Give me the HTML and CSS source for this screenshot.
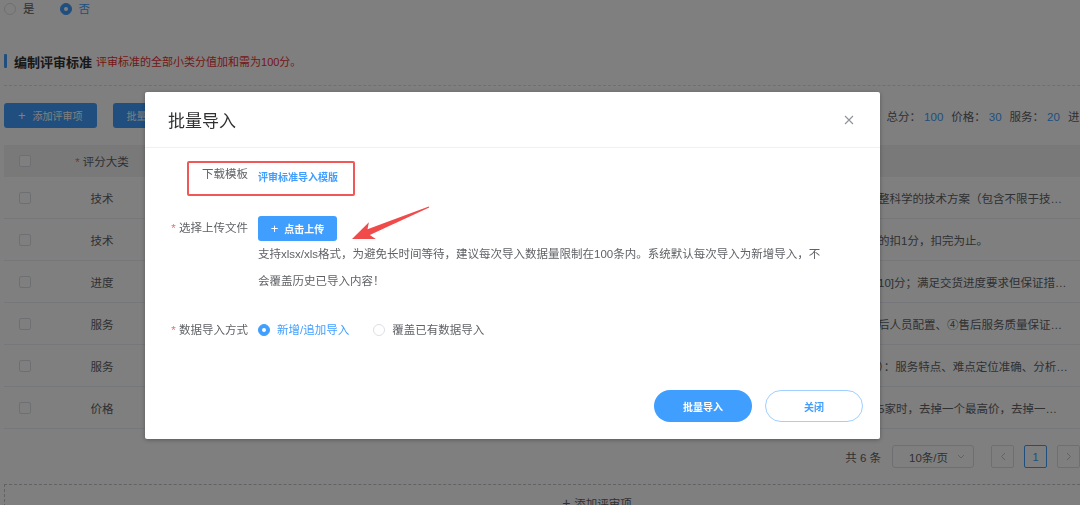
FILE: index.html
```html
<!DOCTYPE html>
<html lang="zh-CN">
  <head>
    <meta charset="utf-8" />
    <title>编制评审标准 - 批量导入</title>
    <link rel="stylesheet" href="styles.css">
  </head>

  <body>
    <div class="page">
      <div class="radio-row">
        <label class="radio"><span class="radio-dot"></span>是</label>
        <label class="radio is-checked"><span class="radio-dot"></span>否</label>
      </div>

      <div class="section-title">
        <span class="title-bar"></span>
        <b>编制评审标准</b>
        <span class="title-tip">评审标准的全部小类分值加和需为100分。</span>
      </div>
      <div class="divider"></div>

      <div class="toolbar">
        <button type="button" class="btn btn-primary"><span class="plus">+</span>添加评审项</button>
        <button type="button" class="btn btn-primary">批量导入</button>
        <div class="score-sum">
          总分：<em>100</em>价格：<em>30</em>服务：<em>20</em>进
        </div>
      </div>

      <!-- 评审项表格 -->
      <div class="table">
        <div class="tr th">
          <div class="td"><span class="checkbox"></span></div>
          <div class="td center"><i class="req">*</i> 评分大类</div>
          <div class="td"></div>
          <div class="td"></div>
          <div class="td"></div>
          <div class="td"></div>
        </div>
        <div class="tr">
          <div class="td"><span class="checkbox"></span></div>
          <div class="td center">技术</div>
          <div class="td">技术方案</div>
          <div class="td">20</div>
          <div class="td desc">整科学的技术方案（包含不限于技术路线、实施方案）</div>
          <div class="td"></div>
        </div>
        <div class="tr">
          <div class="td"><span class="checkbox"></span></div>
          <div class="td center">技术</div>
          <div class="td">技术偏离</div>
          <div class="td">10</div>
          <div class="td desc">的扣1分，扣完为止。</div>
          <div class="td"></div>
        </div>
        <div class="tr">
          <div class="td"><span class="checkbox"></span></div>
          <div class="td center">进度</div>
          <div class="td">交货进度</div>
          <div class="td">20</div>
          <div class="td desc">10]分；满足交货进度要求但保证措施一般的</div>
          <div class="td"></div>
        </div>
        <div class="tr">
          <div class="td"><span class="checkbox"></span></div>
          <div class="td center">服务</div>
          <div class="td">售后服务</div>
          <div class="td">10</div>
          <div class="td desc">后人员配置、④售后服务质量保证措施</div>
          <div class="td"></div>
        </div>
        <div class="tr">
          <div class="td"><span class="checkbox"></span></div>
          <div class="td center">服务</div>
          <div class="td">服务方案</div>
          <div class="td">10</div>
          <div class="td desc">）：服务特点、难点定位准确、分析透彻</div>
          <div class="td"></div>
        </div>
        <div class="tr">
          <div class="td"><span class="checkbox"></span></div>
          <div class="td center">价格</div>
          <div class="td">投标报价</div>
          <div class="td">30</div>
          <div class="td desc">5家时，去掉一个最高价，去掉一个最低价</div>
          <div class="td"></div>
        </div>
      </div>

      <div class="pager">
        <span class="pager-total">共 6 条</span>
        <div class="pager-size">10条/页<svg width="8" height="5" viewBox="0 0 8 5"><path d="M1 1l3 3 3-3" fill="none" stroke="#c0c4cc" stroke-width="1"/></svg></div>
        <button type="button" class="pager-btn"><svg width="6" height="9" viewBox="0 0 6 9"><path d="M5 1L1.5 4.5 5 8" fill="none" stroke="#c0c4cc"/></svg></button>
        <button type="button" class="pager-btn active">1</button>
        <button type="button" class="pager-btn"><svg width="6" height="9" viewBox="0 0 6 9"><path d="M1 1l3.5 3.5L1 8" fill="none" stroke="#c0c4cc"/></svg></button>
      </div>

      <div class="add-box"><span class="plus">+</span>添加评审项</div>
    </div>

    <div class="mask"></div>

    <!-- 批量导入弹窗 -->
    <div class="dialog">
      <div class="dialog-header">
        <span class="dialog-title">批量导入</span>
        <svg class="dialog-close" width="10" height="10" viewBox="0 0 10 10"><path d="M1 1l8 8M9 1l-8 8" stroke="#909399" stroke-width="1.1"/></svg>
      </div>

      <div class="dialog-body">
        <div class="form-row row-template">
          <div class="form-label">下载模板</div>
          <a class="template-link">评审标准导入模版</a>
          <div class="mark-box"></div>
        </div>

        <div class="form-row row-upload">
          <div class="form-label"><i class="req">*</i> 选择上传文件</div>
          <div class="form-content">
            <button type="button" class="upload-btn"><span class="plus">+</span>点击上传</button>
            <p class="upload-tip">支持xlsx/xls格式，为避免长时间等待，建议每次导入数据量限制在100条内。系统默认每次导入为新增导入，不会覆盖历史已导入内容！</p>
          </div>
        </div>

        <div class="form-row row-mode">
          <div class="form-label"><i class="req">*</i> 数据导入方式</div>
          <label class="radio is-checked"><span class="radio-dot"></span>新增/追加导入</label>
          <label class="radio"><span class="radio-dot"></span>覆盖已有数据导入</label>
        </div>
      </div>

      <div class="dialog-footer">
        <button type="button" class="round-btn primary">批量导入</button>
        <button type="button" class="round-btn plain">关闭</button>
      </div>

      <svg class="mark-arrow" width="300" height="160" viewBox="0 0 300 160">
        <polygon points="284.2,115.6 224.8,142.9 230.8,146.9 207,147 223.9,130.3 222.5,137.3 283.8,114.4" fill="#f04a4a"/>
      </svg>
    </div>
  </body>
</html>
```

FILE: styles.css
```css
html {
  overflow: hidden;
}
body {
  margin: 0;
  background: #fff;
  font-family: "Liberation Sans", "Noto Sans CJK SC", sans-serif;
  font-size: 11.5px;
  color: #606266;
}
.page {
  width: 1186px;
  padding-left: 4px;
}
button {
  font-family: inherit;
  cursor: pointer;
}
em {
  font-style: normal;
}
.req {
  font-style: normal;
  color: #f56c6c;
}

/* radio */
.radio {
  display: inline-flex;
  align-items: center;
  color: #606266;
}
.radio-dot {
  width: 10px;
  height: 10px;
  border: 1px solid #dcdfe6;
  border-radius: 50%;
  background: #fff;
  margin-right: 7px;
  position: relative;
}
.radio.is-checked {
  color: #409eff;
}
.radio.is-checked .radio-dot {
  background: #409eff;
  border-color: #409eff;
}
.radio.is-checked .radio-dot::after {
  content: "";
  position: absolute;
  left: 3px;
  top: 3px;
  width: 4px;
  height: 4px;
  border-radius: 50%;
  background: #fff;
}
.radio-row {
  display: flex;
  gap: 25px;
  height: 18px;
  line-height: 18px;
}

/* section */
.section-title {
  margin-top: 33px;
  height: 20px;
  display: flex;
  align-items: center;
}
.title-bar {
  width: 3px;
  height: 14px;
  background: #409eff;
  border-radius: 1px;
  margin-right: 7px;
}
.section-title b {
  font-size: 13px;
  color: #303133;
}
.title-tip {
  font-size: 11px;
  color: #e8302f;
  margin-left: 4px;
}
.divider {
  margin-top: 14px;
  border-top: 1px dashed #dcdfe6;
}

/* toolbar */
.toolbar {
  margin-top: 17px;
  display: flex;
  align-items: center;
}
.btn {
  height: 25px;
  border: 0;
  border-radius: 3px;
  padding: 0 14px;
  font-size: 10px;
  margin-right: 16px;
}
.btn-primary {
  background: #409eff;
  color: #fff;
}
.btn .plus {
  font-size: 13px;
  margin-right: 7px;
}
.score-sum {
  margin-left: 690px;
  color: #606266;
  white-space: nowrap;
}
.score-sum em {
  color: #409eff;
  margin: 0 8px 0 3px;
}

/* table */
.table {
  margin-top: 17px;
}
.tr {
  display: grid;
  grid-template-columns: 42px 112px 300px 410px 230px 92px;
  height: 42px;
  align-items: center;
  border-bottom: 1px solid #ebeef5;
  box-sizing: border-box;
}
.tr.th {
  height: 32px;
  background: #f2f3f5;
  border-bottom: 0;
  color: #606266;
}
.td {
  padding-left: 10px;
  white-space: nowrap;
  overflow: hidden;
}
.td:first-child {
  padding-left: 15px;
  display: flex;
}
.td.center {
  text-align: center;
  padding-left: 0;
}
.td.desc {
  text-overflow: ellipsis;
  padding-right: 30px;
}
.checkbox {
  width: 10px;
  height: 10px;
  border: 1px solid #dcdfe6;
  border-radius: 2px;
  background: #fff;
}

/* pager */
.pager {
  margin-top: 16px;
  display: flex;
  justify-content: flex-end;
  align-items: center;
  padding-right: 110px;
  height: 23px;
}
.pager-total {
  margin-right: 11px;
}
.pager-size {
  border: 1px solid #dcdfe6;
  border-radius: 3px;
  display: flex;
  align-items: center;
  justify-content: space-between;
  padding: 0 8px 0 16px;
  box-sizing: border-box;
  width: 82px;
  height: 23px;
  margin-right: 17px;
}
.pager-btn {
  width: 23px;
  height: 23px;
  border: 1px solid #dcdfe6;
  border-radius: 2px;
  background: #fff;
  color: #606266;
  padding: 0;
  margin-left: 10px;
  display: flex;
  align-items: center;
  justify-content: center;
  font-size: 11px;
}
.pager-size + .pager-btn {
  margin-left: 0;
}
.pager-btn.active {
  border-color: #409eff;
  color: #409eff;
}

.add-box {
  margin-top: 16px;
  height: 36px;
  border: 1px dashed #c0c4cc;
  display: flex;
  align-items: center;
  justify-content: center;
  color: #606266;
}
.add-box .plus {
  font-size: 14px;
  margin-right: 4px;
}

/* dialog */
.mask {
  position: fixed;
  inset: 0;
  background: rgba(0, 0, 0, 0.5);
}
.dialog {
  position: fixed;
  left: 145px;
  top: 92px;
  width: 735px;
  height: 347px;
  background: #fff;
  border-radius: 2px;
  box-shadow: 0 1px 4px rgba(0, 0, 0, 0.3);
}
.dialog-header {
  height: 55px;
  border-bottom: 1px solid #f0f0f0;
  display: flex;
  align-items: center;
  justify-content: space-between;
  padding: 0 26px 0 23px;
}
.dialog-title {
  font-size: 17px;
  color: #303133;
}
.form-row {
  display: flex;
  align-items: flex-start;
}
.form-label {
  width: 103px;
  text-align: right;
  color: #606266;
  flex: none;
}
.form-content {
  margin-left: 10px;
}
.row-template {
  position: relative;
  margin-top: 16px;
  line-height: 20px;
}
.template-link {
  margin-left: 10px;
  padding-top: 4px;
  font-size: 10px;
  font-weight: bold;
  color: #409eff;
}
.mark-box {
  position: absolute;
  left: 42px;
  top: -3px;
  width: 164px;
  height: 31px;
  border: 2px solid #f25757;
  border-radius: 2px;
}
.row-upload {
  margin-top: 28px;
}
.row-upload .form-label {
  line-height: 25px;
}
.upload-btn {
  height: 25px;
  width: 79px;
  border: 0;
  border-radius: 3px;
  background: #409eff;
  color: #fff;
  font-size: 10px;
  font-weight: bold;
  padding: 0;
}
.upload-btn .plus {
  font-size: 13px;
  font-weight: normal;
  margin-right: 6px;
}
.upload-tip {
  margin: 0;
  width: 566px;
  line-height: 27px;
  color: #606266;
}
.row-mode {
  margin-top: 25px;
  line-height: 20px;
}
.row-mode .radio:first-of-type {
  margin-left: 10px;
  margin-right: 24px;
}
.dialog-footer {
  margin-top: 50px;
  display: flex;
  justify-content: flex-end;
  gap: 13px;
  padding-right: 17px;
}
.round-btn {
  width: 98px;
  height: 32px;
  border-radius: 16px;
  font-size: 10px;
  font-weight: bold;
}
.round-btn.primary {
  background: #409eff;
  border: 0;
  color: #fff;
}
.round-btn.plain {
  background: #fff;
  border: 1px solid #a0cfff;
  color: #409eff;
}
.mark-arrow {
  position: absolute;
  left: 0;
  top: 0;
}
```
